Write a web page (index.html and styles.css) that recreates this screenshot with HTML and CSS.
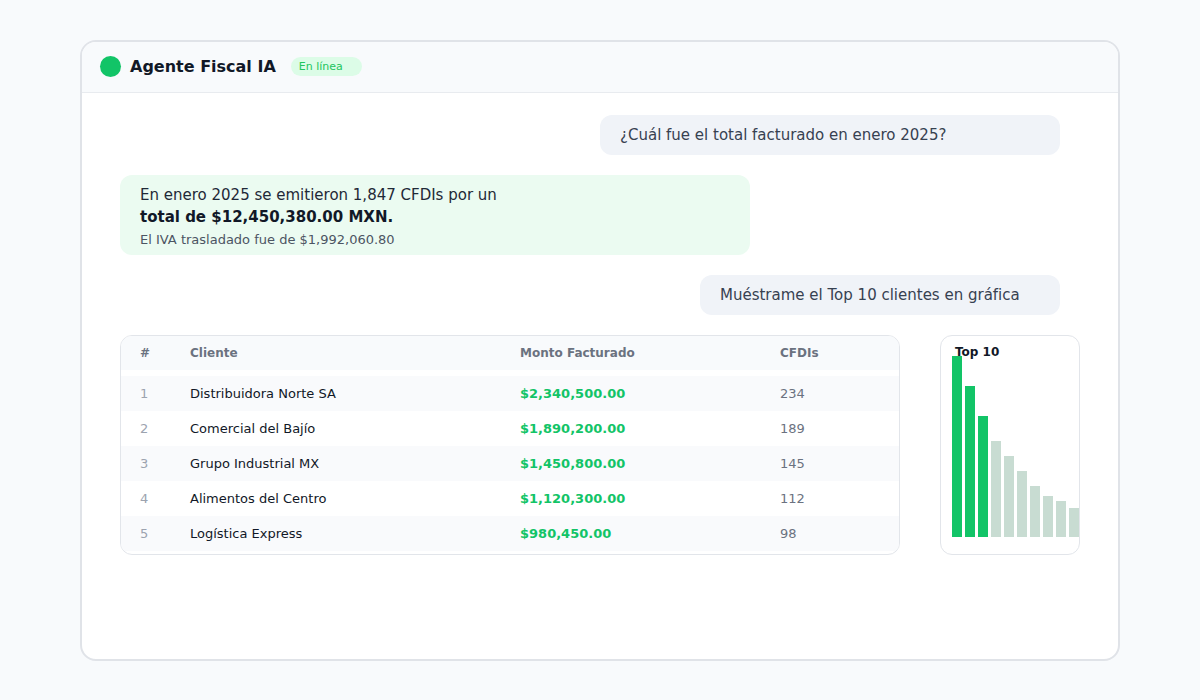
FILE: index.html
```html
<!DOCTYPE html>
<html lang="es">
<head>
  <meta charset="utf-8">
  <title>Agente Fiscal IA</title>
  <link rel="stylesheet" href="styles.css">
</head>
<body>
  <div class="ventana">
    <header class="cabecera">
      <span class="punto"></span>
      <h1>Agente Fiscal IA</h1>
      <span class="estado">En línea</span>
    </header>

    <main class="chat">
      <div class="burbuja usuario ancho-1">¿Cuál fue el total facturado en enero 2025?</div>

      <div class="burbuja agente">
        <p>En enero 2025 se emitieron 1,847 CFDIs por un</p>
        <p class="total">total de $12,450,380.00 MXN.</p>
        <p class="nota">El IVA trasladado fue de $1,992,060.80</p>
      </div>

      <div class="burbuja usuario ancho-2">Muéstrame el Top 10 clientes en gráfica</div>

      <div class="resultado">
        <div class="tabla">
          <div class="fila titulos">
            <span>#</span>
            <span>Cliente</span>
            <span>Monto Facturado</span>
            <span>CFDIs</span>
          </div>
          <div class="cuerpo">
            <div class="fila par">
              <span class="num">1</span>
              <span class="cliente">Distribuidora Norte SA</span>
              <span class="monto">$2,340,500.00</span>
              <span class="cfdis">234</span>
            </div>
            <div class="fila">
              <span class="num">2</span>
              <span class="cliente">Comercial del Bajío</span>
              <span class="monto">$1,890,200.00</span>
              <span class="cfdis">189</span>
            </div>
            <div class="fila par">
              <span class="num">3</span>
              <span class="cliente">Grupo Industrial MX</span>
              <span class="monto">$1,450,800.00</span>
              <span class="cfdis">145</span>
            </div>
            <div class="fila">
              <span class="num">4</span>
              <span class="cliente">Alimentos del Centro</span>
              <span class="monto">$1,120,300.00</span>
              <span class="cfdis">112</span>
            </div>
            <div class="fila par">
              <span class="num">5</span>
              <span class="cliente">Logística Express</span>
              <span class="monto">$980,450.00</span>
              <span class="cfdis">98</span>
            </div>
          </div>
        </div>

        <div class="grafica">
          <div class="grafica-titulo">Top 10</div>
          <div class="barras">
            <span class="barra fuerte" style="height: 181px"></span>
            <span class="barra fuerte" style="height: 151px"></span>
            <span class="barra fuerte" style="height: 121px"></span>
            <span class="barra" style="height: 96px"></span>
            <span class="barra" style="height: 81px"></span>
            <span class="barra" style="height: 66px"></span>
            <span class="barra" style="height: 51px"></span>
            <span class="barra" style="height: 41px"></span>
            <span class="barra" style="height: 36px"></span>
            <span class="barra" style="height: 29px"></span>
          </div>
        </div>
      </div>
    </main>
  </div>
</body>
</html>
```

FILE: styles.css
```css
body {
  margin: 0;
  background-color: #f8fafc;
  font-family: "DejaVu Sans", sans-serif;
  color: #111827;
}

p {
  margin: 0;
}

.ventana {
  width: 1040px;
  height: 621px;
  box-sizing: border-box;
  margin: 40px 0 0 80px;
  background-color: #fff;
  border: 2px solid #e0e3e8;
  border-radius: 16px;
  overflow: hidden;
}

/* cabecera */
.cabecera {
  height: 51px;
  box-sizing: border-box;
  display: flex;
  align-items: center;
  padding-left: 18px;
  padding-bottom: 2px;
  background-color: #f8fafc;
  border-bottom: 1px solid #e8ebef;
}

.punto {
  width: 21px;
  height: 21px;
  border-radius: 50%;
  background-color: #12c467;
  margin-right: 9px;
}

.cabecera h1 {
  margin: 0;
  font-size: 16px;
  font-weight: bold;
  color: #111827;
}

.estado {
  margin-left: 15px;
  width: 71px;
  box-sizing: border-box;
  padding: 3px 8px;
  border-radius: 10px;
  background-color: #dcfce7;
  color: #22c55e;
  font-size: 11px;
}

/* chat */
.chat {
  display: flex;
  flex-direction: column;
  gap: 20px;
  padding: 22px 38px 0 38px;
}

.burbuja {
  border-radius: 12px;
  box-sizing: border-box;
}

.usuario {
  align-self: flex-end;
  margin-right: 20px;
  height: 40px;
  display: flex;
  align-items: center;
  padding-left: 20px;
  background-color: #f0f3f8;
  color: #374151;
  font-size: 15px;
}

.ancho-1 {
  width: 460px;
}

.ancho-2 {
  width: 360px;
}

.agente {
  width: 630px;
  height: 80px;
  padding: 9px 20px 0 20px;
  background-color: #ebfbf1;
  color: #1f2937;
  font-size: 15px;
  line-height: 22px;
}

.agente .total {
  font-weight: bold;
  color: #111827;
}

.agente .nota {
  font-size: 13px;
  color: #4b5563;
  line-height: 24px;
}

/* tabla y grafica */
.resultado {
  display: flex;
  gap: 40px;
}

.tabla {
  width: 780px;
  height: 220px;
  box-sizing: border-box;
  border: 1px solid #e2e5ea;
  border-radius: 12px;
  overflow: hidden;
}

.fila {
  display: grid;
  grid-template-columns: 50px 330px 260px 1fr;
  align-items: center;
  height: 35px;
  padding-left: 19px;
  font-size: 13px;
}

.titulos {
  height: 34px;
  background-color: #f8fafc;
  font-size: 12px;
  font-weight: bold;
  color: #6b7280;
}

.cuerpo {
  padding-top: 6px;
}

.par {
  background-color: #f9fafc;
}

.num {
  color: #9ca3af;
}

.cliente {
  color: #111827;
}

.monto {
  font-weight: bold;
  color: #12c467;
}

.cfdis {
  color: #6b7280;
}

.grafica {
  width: 140px;
  height: 220px;
  box-sizing: border-box;
  border: 1px solid #e2e5ea;
  border-radius: 12px;
  padding: 9px 0 17px 11px;
  display: flex;
  flex-direction: column;
}

.grafica-titulo {
  font-size: 12px;
  font-weight: bold;
  color: #111827;
  line-height: 14px;
  padding-left: 3px;
}

.barras {
  flex: 1;
  min-height: 0;
  display: flex;
  align-items: flex-end;
  gap: 3px;
}

.barra {
  width: 10px;
  background-color: #c8dcd2;
}

.barra.fuerte {
  background-color: #12c467;
}
```
